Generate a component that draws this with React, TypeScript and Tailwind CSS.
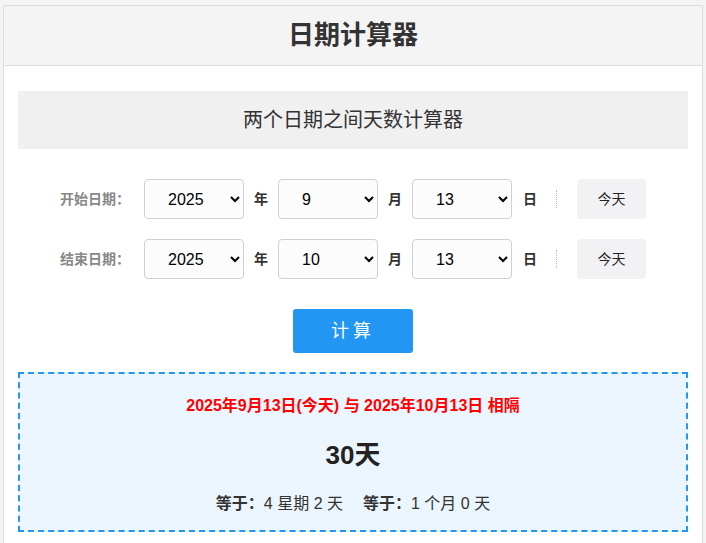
import { useState } from 'react';

const years = [2023, 2024, 2025, 2026, 2027];
const months = Array.from({ length: 12 }, (_, i) => i + 1);
const days = Array.from({ length: 31 }, (_, i) => i + 1);

function DateRow({ label, y, m, d }: { label: string; y: number; m: number; d: number }) {
  const [year, setYear] = useState(y);
  const [month, setMonth] = useState(m);
  const [day, setDay] = useState(d);
  const sel = 'w-[100px] h-10 pl-[19px] pr-2 border border-[#cfcfd4] rounded-[4px] bg-[#fcfcfd] text-[16px] text-black';

  return (
    <div className="flex items-center justify-center h-10">
      <span className="w-[70px] text-[14px] font-bold text-[#888]">{label}</span>
      <select className={`${sel} ml-[14px]`} value={year} onChange={(e) => setYear(+e.target.value)}>
        {years.map((v) => <option key={v} value={v}>{v}</option>)}
      </select>
      <span className="mx-[10px] text-[14px] font-bold text-[#333]">年</span>
      <select className={sel} value={month} onChange={(e) => setMonth(+e.target.value)}>
        {months.map((v) => <option key={v} value={v}>{v}</option>)}
      </select>
      <span className="mx-[10px] text-[14px] font-bold text-[#333]">月</span>
      <select className={sel} value={day} onChange={(e) => setDay(+e.target.value)}>
        {days.map((v) => <option key={v} value={v}>{v}</option>)}
      </select>
      <span className="ml-[11px] text-[14px] font-bold text-[#333]">日</span>
      <span className="ml-[19px] h-[18px] border-l border-dotted border-[#b8b8c0]" />
      <button className="ml-[20px] w-[69px] h-10 rounded-[4px] bg-[#f2f2f4] text-[14px] text-[#222]">今天</button>
    </div>
  );
}

export default function App() {
  return (
    <div className="min-h-[543px] bg-[#f4f4f4] pt-[5px] px-[3px] font-['Liberation_Sans','Noto_Sans_CJK_SC',sans-serif]">
      <div className="bg-white border border-[#dddddd] min-h-[600px]">
        {/* Header */}
        <div className="h-[60px] bg-[#f4f4f4] border-b border-[#dddddd] flex items-center justify-center">
          <h1 className="text-[26px] font-bold text-[#333]">日期计算器</h1>
        </div>

        <div className="px-[14px] pt-[25px]">
          <div className="h-[58px] bg-[#f0f0f0] flex items-center justify-center text-[20px] text-[#333]">
            两个日期之间天数计算器
          </div>

          <div className="mt-[30px] flex flex-col gap-5">
            <DateRow label="开始日期：" y={2025} m={9} d={13} />
            <DateRow label="结束日期：" y={2025} m={10} d={13} />
          </div>

          <div className="mt-[30px] flex justify-center">
            <button className="w-[120px] h-[44px] rounded-[3px] bg-[#2196f3] text-white text-[18px] tracking-[4px]">计算</button>
          </div>

          {/* Result */}
          <div className="mt-[19px] h-[160px] border-2 border-dashed border-[#2196f3] bg-[#eaf5fe] flex flex-col items-center">
            <p className="mt-[20px] text-[16px] font-bold text-[#ff0000]">2025年9月13日(今天) 与 2025年10月13日 相隔</p>
            <p className="mt-[18px] text-[26px] font-bold text-[#222]">30天</p>
            <p className="mt-[17px] text-[16px] text-[#333]">
              <b>等于：</b>4 星期 2 天<span className="ml-5" /><b>等于：</b>1 个月 0 天
            </p>
          </div>
        </div>
      </div>
    </div>
  );
}
